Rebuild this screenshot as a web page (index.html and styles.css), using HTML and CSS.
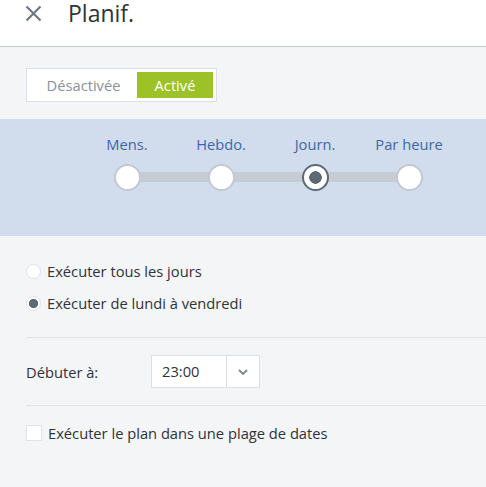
FILE: index.html
```html
<!DOCTYPE html>
<html lang="fr">
<head>
<meta charset="utf-8">
<title>Planif.</title>
<link rel="stylesheet" href="styles.css">
</head>
<body>
<header class="header">
  <svg class="close" width="17" height="17" viewBox="0 0 17 17"><path d="M1.5 1.5 L15.5 15.5 M15.5 1.5 L1.5 15.5" stroke="#6f7781" stroke-width="2.2" fill="none"/></svg>
  <h1 class="title">Planif.</h1>
</header>
<div class="toggle-wrap">
  <div class="toggle">
    <span class="seg off">Désactivée</span>
    <span class="seg on">Activé</span>
  </div>
</div>
<section class="band">
  <div class="freq">
    <div class="track"></div>
    <div class="step"><span class="lbl">Mens.</span><span class="dot"></span></div>
    <div class="step"><span class="lbl">Hebdo.</span><span class="dot"></span></div>
    <div class="step"><span class="lbl">Journ.</span><span class="dot sel"></span></div>
    <div class="step"><span class="lbl">Par heure</span><span class="dot"></span></div>
  </div>
</section>
<section class="radios">
  <div class="row"><span class="radio"></span><span>Exécuter tous les jours</span></div>
  <div class="row"><span class="radio checked"></span><span>Exécuter de lundi à vendredi</span></div>
</section>
<hr class="div">
<section class="start">
  <span class="start-lbl">Débuter à:</span>
  <div class="select"><span class="val">23:00</span><span class="arrow"><svg width="10" height="6" viewBox="0 0 10 6"><path d="M1 1 L5 5 L9 1" stroke="#7d8792" stroke-width="1.8" fill="none"/></svg></span></div>
</section>
<hr class="div">
<section class="check-row">
  <span class="check"></span><span>Exécuter le plan dans une plage de dates</span>
</section>
</body>
</html>
```
FILE: styles.css
```css
html, body { margin: 0; padding: 0; }
body {
  background: #f4f5f7;
  font-family: "Open Sans", "Noto Sans", sans-serif;
  font-size: 14.7px;
  color: #2f3338;
  height: 487px;
  overflow: hidden;
}
.header {
  height: 46px;
  background: #fff;
  border-bottom: 1px solid #c8cdd4;
  display: flex;
  align-items: flex-start;
  padding-left: 25px;
  box-sizing: content-box;
}
.close { margin-top: 5px; }
.title {
  margin: 0 0 0 26px;
  font-size: 23px;
  font-weight: 400;
  color: #2f3338;
  line-height: 26px;
}
.toggle-wrap { padding: 21px 26px 17px; }
.toggle {
  display: inline-flex;
  background: #fff;
  border: 1px solid #dcdfe4;
  padding: 3px;
}
.seg {
  height: 26px;
  line-height: 26px;
  text-align: center;
}
.seg.off { width: 107px; color: #8a9199; }
.seg.on { width: 76px; background: #9cc227; color: #fff; }
.band {
  background: #d1ddec;
  height: 117px;
  padding-top: 16px;
  box-sizing: border-box;
}
.freq {
  position: relative;
  display: grid;
  grid-template-columns: repeat(4, 94px);
  margin-left: 80px;
  width: 376px;
}
.track {
  position: absolute;
  left: 47px;
  right: 47px;
  top: 37px;
  height: 10px;
  background: #c6ccd3;
}
.step {
  display: flex;
  flex-direction: column;
  align-items: center;
  gap: 10px;
  position: relative;
}
.lbl { color: #3d67a5; line-height: 19px; }
.dot {
  width: 23px;
  height: 23px;
  border-radius: 50%;
  background: #fff;
  border: 2px solid #c3c9d0;
}
.dot.sel {
  border-color: #5d6975;
  background: radial-gradient(circle, #5d6975 0 6px, #fff 6.5px);
}
.radios { padding: 19px 0 18px 26px; }
.row {
  height: 32px;
  display: flex;
  align-items: center;
  gap: 6px;
}
.radio {
  width: 13px;
  height: 13px;
  border-radius: 50%;
  border: 1px solid #dfe2e6;
  background: #fff;
}
.radio.checked {
  background: radial-gradient(circle, #5d6975 0 4.3px, #fff 5px);
}
.div {
  margin: 0 0 0 26px;
  border: 0;
  border-top: 1px solid #dfe2e6;
  height: 0;
}
.start {
  display: flex;
  align-items: center;
  padding: 17px 0 17px 26px;
}
.start-lbl { width: 125px; }
.select {
  display: flex;
  height: 31px;
  background: #fff;
  border: 1px solid #dcdfe4;
}
.val {
  width: 64px;
  padding-left: 10px;
  line-height: 31px;
  border-right: 1px solid #dcdfe4;
}
.arrow {
  width: 32px;
  display: flex;
  align-items: center;
  justify-content: center;
}
.check-row {
  display: flex;
  align-items: center;
  gap: 6px;
  padding: 18px 0 0 26px;
  height: 18px;
}
.check {
  width: 14px;
  height: 14px;
  border: 1px solid #dfe2e6;
  background: #fff;
}
```
